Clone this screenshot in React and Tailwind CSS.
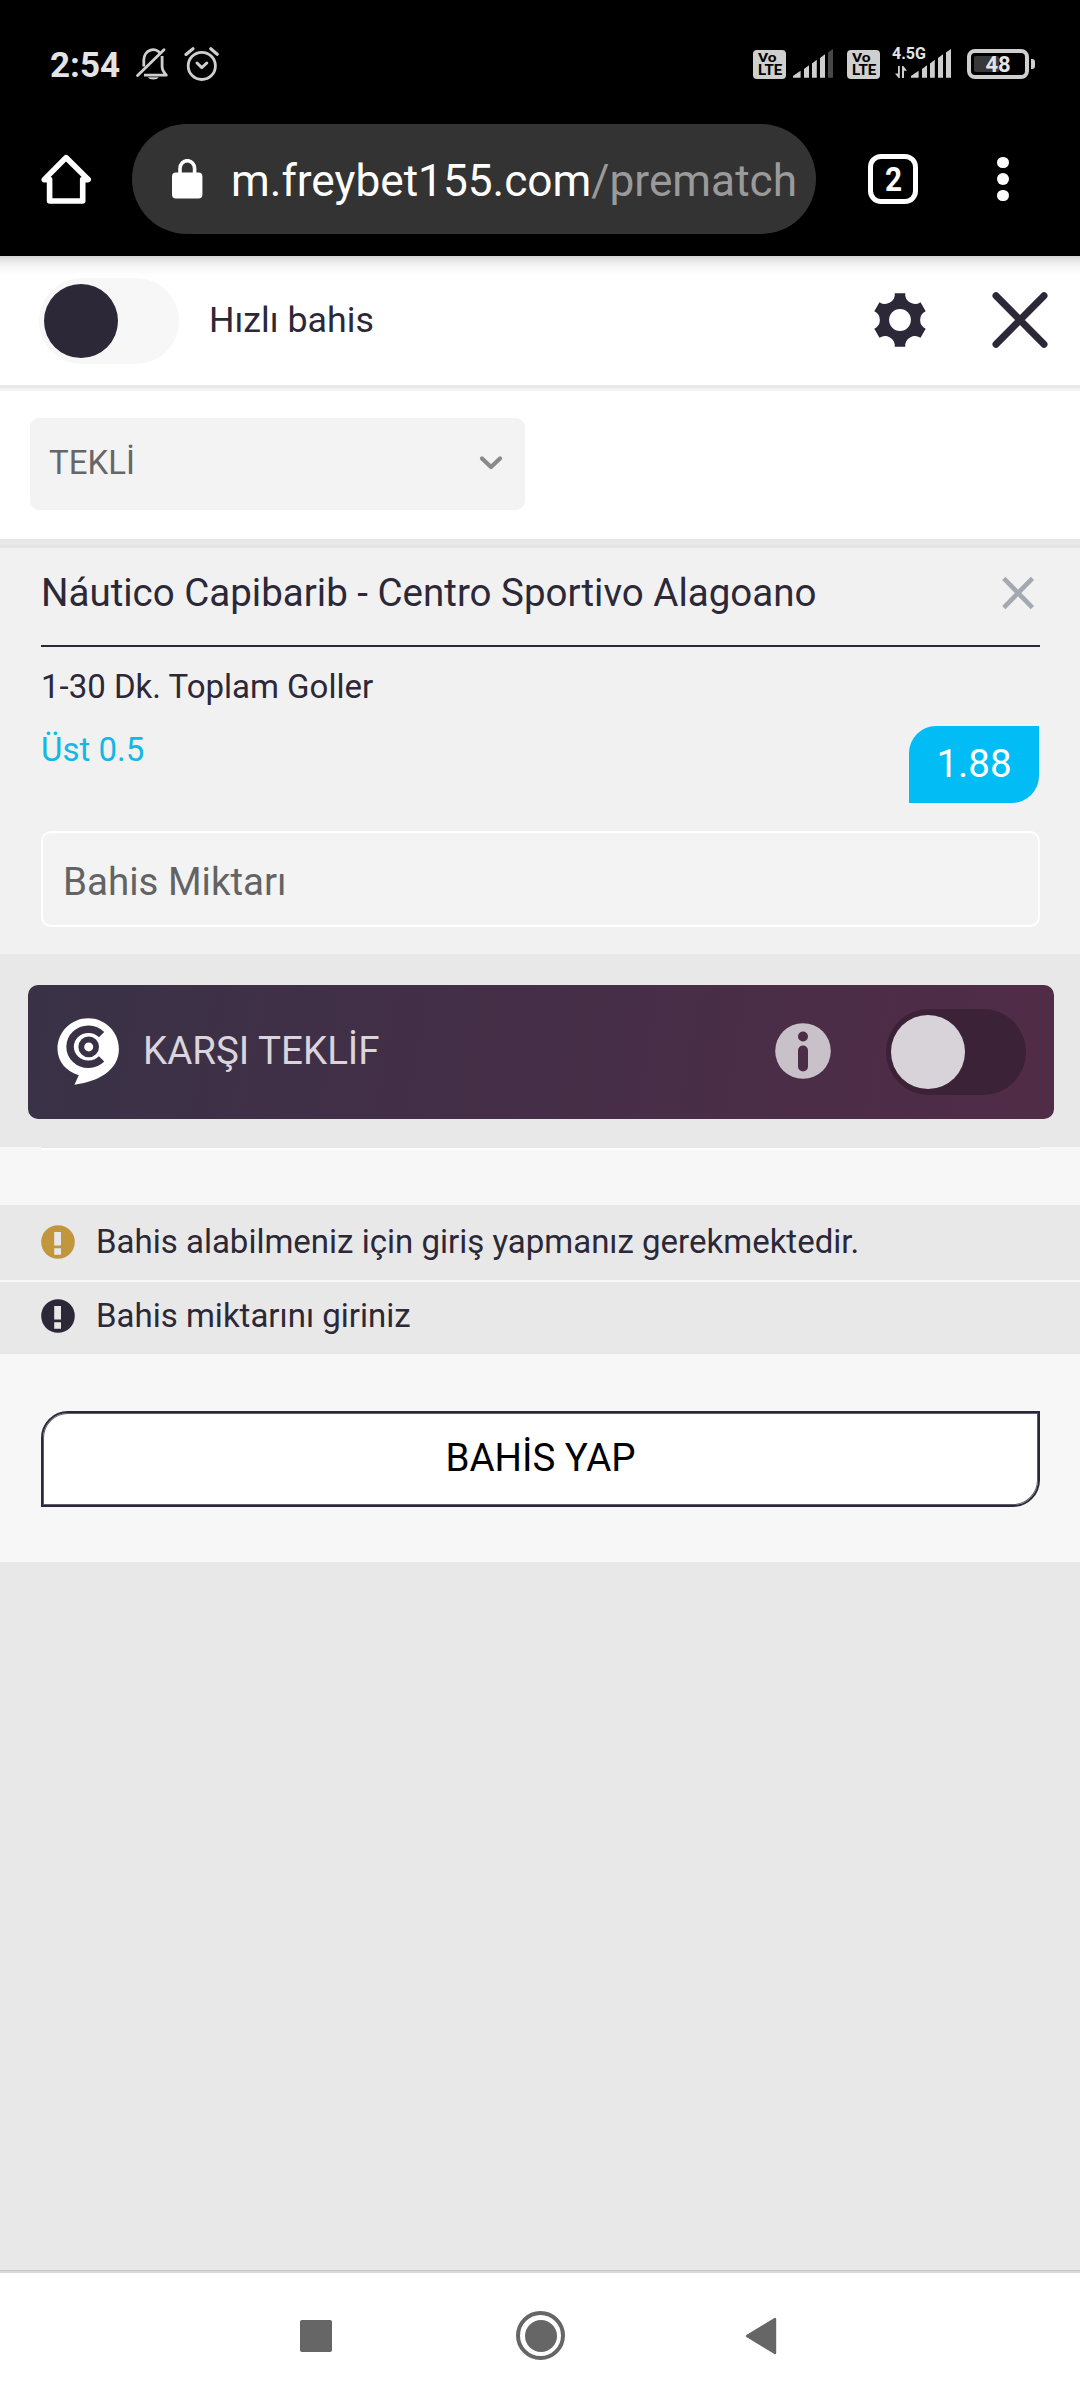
import React from "react";

const GEAR_TEETH = 6;

// Outline of the settings gear, one scalloped arc between each pair of teeth
function gearPath(cx, cy) {
  const point = (x, y, angle) => {
    const c = Math.cos(angle),
      s = Math.sin(angle);
    return `${(cx + x * c - y * s).toFixed(2)} ${(cy + x * s + y * c).toFixed(2)}`;
  };
  let d = "";
  for (let i = 0; i < GEAR_TEETH; i++) {
    const angle = (i * Math.PI * 2) / GEAR_TEETH;
    const next = ((i + 1) * Math.PI * 2) / GEAR_TEETH;
    d += `${i === 0 ? "M" : "L"}${point(-5.2, -26.7, angle)} L${point(5.2, -26.7, angle)} `;
    d += `A9.8 9.8 0 0 0 ${point(-5.2, -26.7, next)} `;
  }
  return d + "Z";
}

function MutedBellIcon() {
  return (
    <svg width="33" height="34" viewBox="136 47 33 34" fill="none" stroke="#cfcfcf" strokeWidth="2.8">
      <path d="M143.8 66.5V60a9.3 10.5 0 0 1 17-5.6" />
      <path d="M162.1 56v10.5c0 4 1.5 5.5 4.2 8.6h-22.3" strokeLinejoin="round" />
      <path d="M137.6 75.6L164 49.8" strokeLinecap="round" />
      <path d="M148 77.2h10.6a5.5 3 0 0 1-10.6 0z" fill="#cfcfcf" stroke="none" />
    </svg>
  );
}

function AlarmIcon() {
  return (
    <svg width="35" height="36" viewBox="184 46 35 36" fill="none" stroke="#cfcfcf" strokeWidth="2.8" strokeLinecap="round">
      <circle cx="201.8" cy="65.9" r="13.6" />
      <path d="M197 63l4.8 4.6 5-4.6" strokeWidth="3" strokeLinejoin="round" />
      <path d="M186 54.4l7-5.6M210.8 48.8l6.4 5.4" strokeWidth="3.2" />
    </svg>
  );
}

function VolteBadge() {
  return (
    <div className="w-[33px] h-[29px] rounded-[4px] bg-[#cfcfcf] text-black font-bold flex flex-col items-start">
      <span className="ml-[5px] mt-[2px] h-[12px] text-[12px] leading-[12px] origin-left scale-x-[1.3]">Vo</span>
      <span className="ml-[5px] h-[13px] text-[14px] leading-[13px] origin-left scale-x-[1.08]">LTE</span>
    </div>
  );
}

function SignalIcon({ weak = false }) {
  return (
    <svg width="40" height="29" viewBox="0 0 40 29" fill="#cfcfcf">
      <path d="M0 28.7v-1.6l7.6-5.4v7z" />
      <path d="M11 28.7v-8.8l5-3.6v12.4z" />
      <path d="M19 28.7V14.4l4.8-3.6v17.9z" />
      <path d="M27 28.7V8.9l5-3.6v23.4z" />
      <path d="M35 28.7V3.4L40 0v28.7z" fill={weak ? "#484848" : "#cfcfcf"} />
    </svg>
  );
}

function Battery() {
  return (
    <div className="flex items-center gap-[2px]">
      <div className="w-[62px] h-[30px] rounded-[8px] border-4 border-[#cfcfcf] flex items-center relative">
        <div className="w-[25px] h-[16px] ml-[3px] rounded-[2px] bg-[#383838]" />
        <span className="absolute inset-0 top-[1px] flex items-center justify-center text-[22px] leading-none font-bold text-[#e4e4e4]">
          48
        </span>
      </div>
      <div className="w-[4px] h-[10px] rounded-r-[3px] bg-[#cfcfcf]" />
    </div>
  );
}

function StatusBar() {
  return (
    <div className="h-[128px] pl-[50px] pr-[45px] flex items-center">
      <span className="w-[86px] mt-[2px] text-[35px] leading-none font-bold text-[#e4e4e4]">2:54</span>
      <div className="flex-1 flex items-center gap-[15px]">
        <MutedBellIcon />
        <AlarmIcon />
      </div>
      <VolteBadge />
      <div className="ml-[7px] mr-[14px] mb-[1px]">
        <SignalIcon weak />
      </div>
      <VolteBadge />
      <div className="ml-[31px] mr-[16px] mb-[1px] relative">
        <SignalIcon />
        <span className="absolute left-[-19px] top-[-3px] text-[16px] leading-none font-bold text-[#e4e4e4]">
          4.5G
        </span>
        <svg width="12" height="12" viewBox="0 0 12 12" className="absolute left-[-16px] top-[17px]" fill="#cfcfcf">
          <path d="M3 0h1.8v12H3.6L0 7.4h3z" />
          <path d="M7 0h1.4L12 4.8H9V12H7z" />
        </svg>
      </div>
      <Battery />
    </div>
  );
}

function BrowserBar() {
  return (
    <div className="h-[128px] pb-[26px] flex items-center">
      <svg width="52" height="52" viewBox="40 153 52 52" className="ml-[40px]" fill="none" stroke="#fff">
        <path
          d="M44.2 179.6L66 157.6l22.2 22H82.7V201H49.6V179.6z"
          strokeWidth="5.6"
          strokeLinejoin="round"
        />
      </svg>
      <div className="ml-[40px] w-[684px] h-[110px] shrink-0 rounded-full bg-[#333333] flex items-center">
        <svg width="31" height="40" viewBox="0 0 31 40" className="ml-[40px]">
          <rect y="13.4" width="30.4" height="26.2" rx="4" fill="#fff" />
          <path d="M8 14.5V9.4a7.2 7.6 0 0 1 14.6 0v5.1" fill="none" stroke="#fff" strokeWidth="3.6" />
        </svg>
        <span className="ml-[28px] mt-[5px] text-[44.2px] leading-none whitespace-nowrap text-white">
          m.freybet155.com<span className="text-[#9a9a9a]">/prematch</span>
        </span>
      </div>
      <div className="ml-[52px] w-[50px] h-[50px] rounded-[13px] border-[5.5px] border-white flex items-center justify-center text-[33px] leading-none font-bold text-white">
        <span className="scale-x-90">2</span>
      </div>
      <div className="ml-[79px] flex flex-col gap-[5px]">
        <i className="size-[11.5px] rounded-full bg-white" />
        <i className="size-[11.5px] rounded-full bg-white" />
        <i className="size-[11.5px] rounded-full bg-white" />
      </div>
    </div>
  );
}

function Toggle({ track, knob }) {
  return (
    <div className={`w-[140px] h-[86px] rounded-full pl-[5px] flex items-center shrink-0 ${track}`}>
      <div className={`size-[74px] rounded-full ${knob}`} />
    </div>
  );
}

function SlipHeader() {
  return (
    <div className="h-[135px] bg-[linear-gradient(#d4d4d4_0,#e6e6e6_4px,#f7f7f7_11px,#fff_20px)] border-b-[3px] border-[#f2f2f2]">
      <div className="h-[132px] pl-[39px] pr-[31px] flex items-center border-b-[3px] border-[#e8e8e8]">
        <Toggle track="bg-[#f7f7f7]" knob="bg-[#2c2838]" />
        <span className="ml-[30px] flex-1 text-[35.75px] leading-none">Hızlı bahis</span>
        <svg width="54" height="54" viewBox="0 0 54 54" className="mb-[1px]">
          <path d={gearPath(27, 27)} fill="#2c2838" />
          <circle cx="27" cy="27" r="10.9" fill="#fff" />
        </svg>
        <svg width="58" height="58" viewBox="0 0 58 58" className="ml-[64px] mb-[1px]">
          <path d="M5 4.8l48 48.4M53 4.8L5 53.2" stroke="#2c2838" strokeWidth="7" strokeLinecap="round" />
        </svg>
      </div>
    </div>
  );
}

function BetTypeSelect() {
  return (
    <div className="h-[148px] bg-white pl-[30px] pt-[27px]">
      <div className="w-[495px] h-[92px] rounded-[9px] bg-[#f3f3f3] pl-[19px] pr-[22px] flex items-center justify-between text-[#666666]">
        <span className="text-[33px] leading-none mt-[-3px]">TEKLİ</span>
        <svg width="24" height="16" viewBox="0 0 24 16" className="mt-[-2px]">
          <path
            d="M3 3.5l9 8.6 9-8.6"
            fill="none"
            stroke="#8a8a8a"
            strokeWidth="4.2"
            strokeLinecap="round"
            strokeLinejoin="round"
          />
        </svg>
      </div>
    </div>
  );
}

function BetCard() {
  return (
    <div className="h-[406px] pl-[41px] pr-[40px] bg-[#f1f1f1]">
      <div className="h-[99px] pb-[8px] border-b-2 border-[#2c2838] flex items-center justify-between">
        <span className="mt-[2px] text-[38.5px] leading-none">Náutico Capibarib - Centro Sportivo Alagoano</span>
        <svg width="34" height="34" viewBox="0 0 34 34" className="mr-[5px]">
          <path d="M2.8 2.4l28.6 29.2M31.4 2.4L2.8 31.6" stroke="#a4a8b0" strokeWidth="4.6" />
        </svg>
      </div>
      <div className="h-[184px] flex justify-between">
        <div className="pt-[20px] flex flex-col gap-[24px] text-[33px] leading-[39px]">
          <span>1-30 Dk. Toplam Goller</span>
          <span className="text-[#12b7e6]">Üst 0.5</span>
        </div>
        <div className="mt-[79px] mr-[1px] w-[130px] h-[77px] rounded-tl-[27px] rounded-br-[27px] bg-[#02bdf5] text-white text-[38.5px] leading-[75px] text-center">
          1.88
        </div>
      </div>
      <div className="h-[96px] rounded-[10px] border-2 border-white bg-[#f3f3f3] pl-[20px] pt-[6px] flex items-center text-[38.5px] leading-none text-[#636363]">
        Bahis Miktarı
      </div>
    </div>
  );
}

function CounterOfferLogo() {
  return (
    <svg width="62" height="68" viewBox="57 1018 62 68">
      <path
        d="M88.2 1018.3c17 0 30.7 13.6 30.7 30.5 0 11-5 19-14 25.4-9 6-19 8.6-30.5 10.5l4.4-9.4c-12.5-4-21.3-13.5-21.3-26.5 0-16.9 13.7-30.5 30.7-30.5z"
        fill="#fff"
      />
      <path d="M101.6 1034.7a18.3 17.5 0 1 0 0 24.2" fill="none" stroke="#3b3147" strokeWidth="7.5" />
      <circle cx="88.7" cy="1046.9" r="7.4" fill="none" stroke="#3b3147" strokeWidth="5.8" />
    </svg>
  );
}

function CounterOffer() {
  return (
    <div className="h-[193px] pt-[31px] pl-[28px] pr-[26px] bg-[#e8e8e8]">
      <div className="h-[134px] pl-[29px] pr-[28px] rounded-[10px] bg-[linear-gradient(100deg,#393246,#452e47_50%,#512c47)] flex items-center">
        <CounterOfferLogo />
        <span className="ml-[24px] flex-1 text-[38.5px] leading-none mt-[-1px] text-[#dad4dc]">KARŞI TEKLİF</span>
        <svg width="56" height="56" viewBox="0 0 56 56" className="mr-[55px] mb-[2px]">
          <circle cx="28" cy="28" r="27.8" fill="#c9c1c9" />
          <circle cx="28" cy="13.5" r="5" fill="#4b2d47" />
          <rect x="23" y="22.5" width="10" height="26" rx="5" fill="#4b2d47" />
        </svg>
        <Toggle track="bg-[#3b2236]" knob="bg-[#d8d3d8]" />
      </div>
    </div>
  );
}

function Notice({ color, className, children }) {
  return (
    <div className={`h-full pl-[41px] bg-[#e8e8e8] flex items-center ${className}`}>
      <svg width="34" height="34" viewBox="0 0 34 34">
        <circle cx="17" cy="17" r="16.8" fill={color} />
        <path d="M13.2 7h6.8v13.6h-6.8zM13.2 23.2h6.8v6.6h-6.8z" fill="#e8e8e8" />
      </svg>
      <span className="ml-[21px] text-[33px] leading-none">{children}</span>
    </div>
  );
}

function NavBar() {
  return (
    <div className="h-[130px] bg-white border-t border-[#c4c5c7]">
      <div className="h-[129px] pb-[2px] border-t-2 border-[#d9dadc] pl-[300px] pr-[303px] flex items-center justify-between">
        <div className="size-[32px] rounded-[2px] bg-[#666666]" />
        <div className="size-[49px] rounded-full border-4 border-[#666666] p-[4.5px] ml-[4px]">
          <div className="size-full rounded-full bg-[#666666]" />
        </div>
        <svg width="32" height="38" viewBox="0 0 32 38">
          <path d="M2 19L30 2v34z" fill="#666666" stroke="#666666" strokeWidth="2.4" strokeLinejoin="round" />
        </svg>
      </div>
    </div>
  );
}

export default function App() {
  return (
    <div className="w-[1080px] h-[2400px] overflow-hidden flex flex-col bg-[#e8e8e8] text-[#2c2838] font-['Roboto',sans-serif]">
      <div className="bg-black">
        <StatusBar />
        <BrowserBar />
      </div>

      <SlipHeader />
      <BetTypeSelect />
      <div className="h-[9px] bg-[#e8e8e8] border-b-[3px] border-[#e4e4e4]" />
      <BetCard />
      <CounterOffer />

      <div className="bg-[#f7f7f7]">
        <div className="h-[58px] pl-[41px] pr-[40px]">
          <div className="h-[3px] border-t border-[#e6e6e6] bg-white" />
        </div>
        <div className="h-[149px] grid grid-rows-[75px_72px] gap-[2px]">
          <Notice color="#c2963d" className="pb-[2px]">
            Bahis alabilmeniz için giriş yapmanız gerekmektedir.
          </Notice>
          <Notice color="#2c2838" className="pb-[5px]">
            Bahis miktarını giriniz
          </Notice>
        </div>
        <div className="h-[208px] pl-[41px] pr-[40px] pt-[57px]">
          <button className="w-full h-[96px] pb-[2px] border-2 border-[#2c2838] shadow-[inset_0_0_0_1px_#605c6c] rounded-tl-[27px] rounded-br-[27px] bg-white text-black text-[38.5px] leading-none">
            BAHİS YAP
          </button>
        </div>
      </div>

      <div className="flex-1" />
      <NavBar />
    </div>
  );
}
